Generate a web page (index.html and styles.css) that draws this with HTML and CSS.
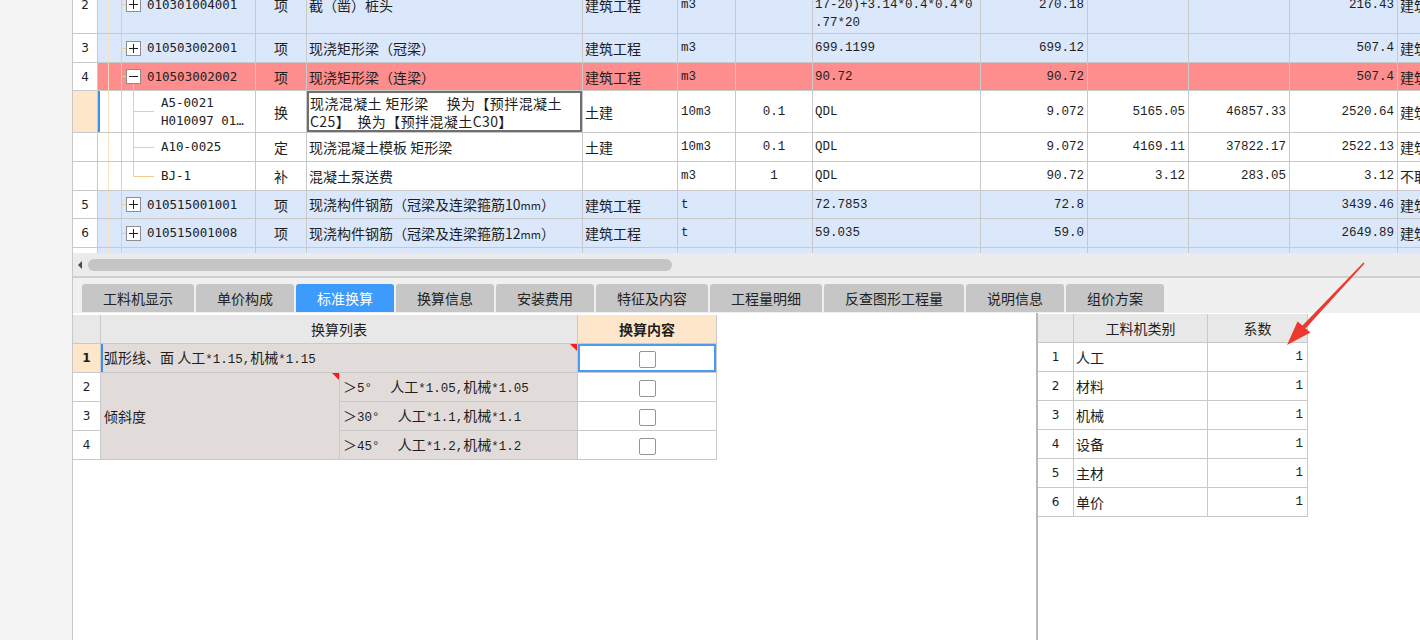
FILE: index.html
```html
<!DOCTYPE html>
<html lang="zh-CN">
<head>
<meta charset="utf-8">
<title>标准换算</title>
<link rel="stylesheet" href="styles.css">
</head>
<body>
<div class="app">
  <aside class="gutter"></aside>
  <main class="workspace">
    <section class="grid-view">
      <table class="grid">
        <colgroup>
          <col class="c-no"><col class="c-code"><col class="c-type"><col class="c-name"><col class="c-spec"><col class="c-unit"><col class="c-qty"><col class="c-expr"><col class="c-amt"><col class="c-price"><col class="c-total"><col class="c-unitp"><col class="c-fee">
        </colgroup>
        <tbody>
          <tr class="blue h58">
            <td class="no">2</td>
            <td class="code parent"><span class="tree"><i class="box plus"></i><span>010301004001</span></span></td>
            <td class="type">项</td>
            <td class="name">截（凿）桩头</td>
            <td class="spec">建筑工程</td>
            <td class="unit n">m3</td>
            <td class="qty n"></td>
            <td class="expr n">3.14*0.4*0.4*0.77*(<br>17-20)+3.14*0.4*0.4*0<br>.77*20</td>
            <td class="r n">270.18</td>
            <td class="r n"></td>
            <td class="r n"></td>
            <td class="r n">216.43</td>
            <td class="fee">建筑工程</td>
          </tr>
          <tr class="blue h29">
            <td class="no">3</td>
            <td class="code parent"><span class="tree"><i class="box plus"></i><span>010503002001</span></span></td>
            <td class="type">项</td>
            <td class="name">现浇矩形梁（冠梁）</td>
            <td class="spec">建筑工程</td>
            <td class="unit n">m3</td>
            <td class="qty n"></td>
            <td class="expr n">699.1199</td>
            <td class="r n">699.12</td>
            <td class="r n"></td>
            <td class="r n"></td>
            <td class="r n">507.4</td>
            <td class="fee">建筑工程</td>
          </tr>
          <tr class="red h28">
            <td class="no">4</td>
            <td class="code parent open"><span class="tree"><i class="box minus"></i><span>010503002002</span></span></td>
            <td class="type">项</td>
            <td class="name">现浇矩形梁（连梁）</td>
            <td class="spec">建筑工程</td>
            <td class="unit n">m3</td>
            <td class="qty n"></td>
            <td class="expr n">90.72</td>
            <td class="r n">90.72</td>
            <td class="r n"></td>
            <td class="r n"></td>
            <td class="r n">507.4</td>
            <td class="fee">建筑工程</td>
          </tr>
          <tr class="white h42 current">
            <td class="no sel"></td>
            <td class="code child focus"><span class="tree">A5-0021<br>H010097 01…</span></td>
            <td class="type">换</td>
            <td class="name editing">现浇混凝土 矩形梁　 换为【预拌混凝土<br>C25】　换为【预拌混凝土C30】</td>
            <td class="spec">土建</td>
            <td class="unit n">10m3</td>
            <td class="qty n">0.1</td>
            <td class="expr n">QDL</td>
            <td class="r n">9.072</td>
            <td class="r n">5165.05</td>
            <td class="r n">46857.33</td>
            <td class="r n">2520.64</td>
            <td class="fee">建筑工程</td>
          </tr>
          <tr class="white h29">
            <td class="no"></td>
            <td class="code child"><span class="tree">A10-0025</span></td>
            <td class="type">定</td>
            <td class="name">现浇混凝土模板 矩形梁</td>
            <td class="spec">土建</td>
            <td class="unit n">10m3</td>
            <td class="qty n">0.1</td>
            <td class="expr n">QDL</td>
            <td class="r n">9.072</td>
            <td class="r n">4169.11</td>
            <td class="r n">37822.17</td>
            <td class="r n">2522.13</td>
            <td class="fee">建筑工程</td>
          </tr>
          <tr class="white h29">
            <td class="no"></td>
            <td class="code child last"><span class="tree">BJ-1</span></td>
            <td class="type">补</td>
            <td class="name">混凝土泵送费</td>
            <td class="spec"></td>
            <td class="unit n">m3</td>
            <td class="qty n">1</td>
            <td class="expr n">QDL</td>
            <td class="r n">90.72</td>
            <td class="r n">3.12</td>
            <td class="r n">283.05</td>
            <td class="r n">3.12</td>
            <td class="fee">不取费</td>
          </tr>
          <tr class="blue h28">
            <td class="no">5</td>
            <td class="code parent"><span class="tree"><i class="box plus"></i><span>010515001001</span></span></td>
            <td class="type">项</td>
            <td class="name">现浇构件钢筋（冠梁及连梁箍筋10<small>mm</small>）</td>
            <td class="spec">建筑工程</td>
            <td class="unit n">t</td>
            <td class="qty n"></td>
            <td class="expr n">72.7853</td>
            <td class="r n">72.8</td>
            <td class="r n"></td>
            <td class="r n"></td>
            <td class="r n">3439.46</td>
            <td class="fee">建筑工程</td>
          </tr>
          <tr class="blue h29">
            <td class="no">6</td>
            <td class="code parent"><span class="tree"><i class="box plus"></i><span>010515001008</span></span></td>
            <td class="type">项</td>
            <td class="name">现浇构件钢筋（冠梁及连梁箍筋12<small>mm</small>）</td>
            <td class="spec">建筑工程</td>
            <td class="unit n">t</td>
            <td class="qty n"></td>
            <td class="expr n">59.035</td>
            <td class="r n">59.0</td>
            <td class="r n"></td>
            <td class="r n"></td>
            <td class="r n">2649.89</td>
            <td class="fee">建筑工程</td>
          </tr>
          <tr class="blue h29">
            <td class="no">7</td>
            <td class="code parent"><span class="tree"><i class="box plus"></i><span>010515001009</span></span></td>
            <td class="type">项</td>
            <td class="name">现浇构件钢筋（冠梁及连梁主筋）</td>
            <td class="spec">建筑工程</td>
            <td class="unit n">t</td>
            <td class="qty n"></td>
            <td class="expr n">18.42</td>
            <td class="r n">18.4</td>
            <td class="r n"></td>
            <td class="r n"></td>
            <td class="r n">3210.5</td>
            <td class="fee">建筑工程</td>
          </tr>
        </tbody>
      </table>
    </section>

    <div class="hscroll"><span class="arrow-left"></span><span class="thumb"></span></div>

    <nav class="tabbar">
      <span class="tab">工料机显示</span>
      <span class="tab">单价构成</span>
      <span class="tab active">标准换算</span>
      <span class="tab">换算信息</span>
      <span class="tab">安装费用</span>
      <span class="tab">特征及内容</span>
      <span class="tab">工程量明细</span>
      <span class="tab">反查图形工程量</span>
      <span class="tab">说明信息</span>
      <span class="tab">组价方案</span>
    </nav>

    <section class="panels">
      <div class="panel-left">
        <table class="sub">
          <colgroup><col class="s-no"><col class="s-a"><col class="s-b"><col class="s-c"></colgroup>
          <thead>
            <tr>
              <th class="hd"></th>
              <th class="hd" colspan="2">换算列表</th>
              <th class="hd hl">换算内容</th>
            </tr>
          </thead>
          <tbody>
            <tr>
              <td class="no sel">1</td>
              <td class="item focus-left mark" colspan="2">弧形线、面 人工<span class="lat">*1.15,</span>机械<span class="lat">*1.15</span></td>
              <td class="chk focus"><span class="checkbox"></span></td>
            </tr>
            <tr>
              <td class="no">2</td>
              <td class="item group mark" rowspan="3">倾斜度</td>
              <td class="item">＞<span class="lat">5°&nbsp;&nbsp;</span> 人工<span class="lat">*1.05,</span>机械<span class="lat">*1.05</span></td>
              <td class="chk"><span class="checkbox"></span></td>
            </tr>
            <tr>
              <td class="no">3</td>
              <td class="item">＞<span class="lat">30°&nbsp;&nbsp;</span> 人工<span class="lat">*1.1,</span>机械<span class="lat">*1.1</span></td>
              <td class="chk"><span class="checkbox"></span></td>
            </tr>
            <tr>
              <td class="no">4</td>
              <td class="item">＞<span class="lat">45°&nbsp;&nbsp;</span> 人工<span class="lat">*1.2,</span>机械<span class="lat">*1.2</span></td>
              <td class="chk"><span class="checkbox"></span></td>
            </tr>
          </tbody>
        </table>
      </div>
      <div class="panel-right">
        <table class="coef">
          <colgroup><col class="k-no"><col class="k-name"><col class="k-val"></colgroup>
          <thead>
            <tr><th class="hd"></th><th class="hd">工料机类别</th><th class="hd">系数</th></tr>
          </thead>
          <tbody>
            <tr><td class="no">1</td><td class="nm">人工</td><td class="val">1</td></tr>
            <tr><td class="no">2</td><td class="nm">材料</td><td class="val">1</td></tr>
            <tr><td class="no">3</td><td class="nm">机械</td><td class="val">1</td></tr>
            <tr><td class="no">4</td><td class="nm">设备</td><td class="val">1</td></tr>
            <tr><td class="no">5</td><td class="nm">主材</td><td class="val">1</td></tr>
            <tr><td class="no">6</td><td class="nm">单价</td><td class="val">1</td></tr>
          </tbody>
        </table>
      </div>
    </section>
  </main>
</div>

<svg class="annot" width="1420" height="640" viewBox="0 0 1420 640" aria-hidden="true">
  <polygon points="1364.6,263.6 1363.4,262.4 1302.5,325.5 1297.5,321.5 1287,345 1310.5,332.5 1305.5,328.5" fill="#ec3a2e"/>
</svg>
</body>
</html>
```

FILE: styles.css
```css
* { box-sizing: border-box; }
html, body { margin: 0; padding: 0; }
body {
  width: 1420px;
  height: 640px;
  overflow: hidden;
  position: relative;
  background: #ffffff;
  font-family: "Noto Sans CJK SC", "Liberation Sans", sans-serif;
  font-size: 14px;
  color: #1e1e1e;
}

.app { display: flex; height: 640px; }
.gutter { width: 72px; flex: none; background: #f3f3f3; }
.workspace {
  flex: 1;
  min-width: 0;
  display: flex;
  flex-direction: column;
  border-left: 1px solid #c8c8c8;
}

/* ---------- main grid ---------- */
.grid-view { height: 253px; flex: none; overflow: hidden; }
.grid {
  border-collapse: separate;
  border-spacing: 0;
  table-layout: fixed;
  width: 1405px;
  margin-top: -24px;
}
.c-no { width: 25px; }
.c-code { width: 158px; }
.c-type { width: 51px; }
.c-name { width: 276px; }
.c-spec { width: 95px; }
.c-unit { width: 58px; }
.c-qty { width: 77px; }
.c-expr { width: 168px; }
.c-amt { width: 107px; }
.c-price { width: 101px; }
.c-total { width: 101px; }
.c-unitp { width: 108px; }
.c-fee { width: 80px; }

.grid td {
  border-right: 1px solid #c9c9c9;
  border-bottom: 1px solid #c9c9c9;
  padding: 0 3px;
  white-space: nowrap;
  overflow: hidden;
  line-height: 18px;
  vertical-align: middle;
}
.h58 { height: 58px; }
.h42 { height: 42px; }
.h29 { height: 29px; }
.h28 { height: 28px; }

.blue td { background-color: #dbe7fb; }
.red td { background-color: #fe8e8e; }
.white td { background-color: #ffffff; }
.grid td.no {
  background-color: #ffffff;
  text-align: center;
  font-family: "DejaVu Sans", sans-serif;
  font-size: 12px;
  padding: 0;
}
.grid td.no.sel { background-color: #fde6c9; }

.grid td.n { font-family: "Liberation Mono", "Noto Sans CJK SC", monospace; font-size: 12.5px; }
.grid td.r { text-align: right; padding-right: 3px; }
.grid td.type { text-align: center; }
.grid td.name { padding-left: 2px; }
.grid td.name small { font-size: 11px; }
.grid td.spec { padding-left: 2px; }
.grid td.qty { text-align: center; }
.grid td.expr { padding-left: 2px; }
.grid td.fee { padding-left: 2px; }
.grid td.editing { box-shadow: inset 0 0 0 2px #6f6f6f; padding-left: 3px; letter-spacing: 0.4px; }

/* tree column */
.grid td.code {
  padding: 0;
  font-family: "DejaVu Sans Mono", monospace;
  font-size: 12.5px;
  color: #222;
  background-image:
    linear-gradient(#fde2c2, #fde2c2),
    linear-gradient(#f8c98e, #f8c98e);
  background-size: 1px 100%, 1px 100%;
  background-position: 10px 0, 23px 0;
  background-repeat: no-repeat;
}
.grid td.code.parent {
  background-image:
    linear-gradient(#fde2c2, #fde2c2),
    linear-gradient(#f8c98e, #f8c98e),
    linear-gradient(#f8c98e, #f8c98e);
  background-size: 1px 100%, 1px 100%, 5px 1px;
  background-position: 10px 0, 23px 0, 23px 50%;
}
.grid td.code.parent.open {
  background-image:
    linear-gradient(#fde2c2, #fde2c2),
    linear-gradient(#f8c98e, #f8c98e),
    linear-gradient(#f8c98e, #f8c98e),
    linear-gradient(#f8c98e, #f8c98e);
  background-size: 1px 100%, 1px 100%, 5px 1px, 1px 50%;
  background-position: 10px 0, 23px 0, 23px 50%, 35px 100%;
}
.grid td.code.child {
  background-image:
    linear-gradient(#fde2c2, #fde2c2),
    linear-gradient(#f8c98e, #f8c98e),
    linear-gradient(#f8c98e, #f8c98e),
    linear-gradient(#f8c98e, #f8c98e);
  background-size: 1px 100%, 1px 100%, 1px 100%, 21px 1px;
  background-position: 10px 0, 23px 0, 35px 0, 35px 50%;
}
.grid td.code.child.last {
  background-size: 1px 100%, 1px 100%, 1px 50%, 21px 1px;
  background-position: 10px 0, 23px 0, 35px 0, 35px 50%;
}
.grid td.code.focus { box-shadow: inset 2px 0 0 #3b8ff0; }

.tree { display: flex; align-items: center; gap: 6px; }
.parent .tree { padding-left: 28px; }
.child .tree { display: block; padding-left: 63px; }

.box {
  position: relative;
  display: inline-block;
  flex: none;
  width: 15px;
  height: 15px;
  border: 1px solid #8d8d8d;
  background: #fff;
}
.box::before, .box::after {
  content: "";
  position: absolute;
  background: #1e1e1e;
}
.box::before { left: 2px; right: 2px; top: 6px; height: 1px; }
.box.plus::after { top: 2px; bottom: 2px; left: 6px; width: 1px; }

/* ---------- horizontal scrollbar ---------- */
.hscroll {
  height: 23px;
  flex: none;
  background: #ebebeb;
  display: flex;
  align-items: center;
  padding-left: 5px;
}
.arrow-left {
  width: 0;
  height: 0;
  border-top: 4px solid transparent;
  border-bottom: 4px solid transparent;
  border-right: 4px solid #4a4a4a;
  margin-right: 6px;
}
.thumb {
  width: 584px;
  height: 12px;
  border-radius: 6px;
  background: #c5c5c5;
}

/* ---------- tabs ---------- */
.tabbar {
  height: 37px;
  flex: none;
  border-top: 2px solid #cfcfcf;
  background: #f0f0f0;
  display: flex;
  align-items: flex-end;
  gap: 2px;
  padding: 0 0 1px 9px;
}
.tab {
  height: 28px;
  padding: 0 21px;
  line-height: 28px;
  background: #c6c6c6;
  border-radius: 3px 3px 0 0;
  color: #222;
  white-space: nowrap;
}
.tab.active { background: #3d9bfc; color: #fff; }

/* ---------- bottom panels ---------- */
.panels { flex: 1; display: flex; min-height: 0; }
.panel-left { width: 963px; flex: none; padding-top: 2px; }
.panel-right { flex: 1; border-left: 2px solid #b9b9b9; padding-top: 1px; }

.sub, .coef {
  border-collapse: separate;
  border-spacing: 0;
  table-layout: fixed;
}
.sub { width: 644px; }
.s-no { width: 28px; }
.s-a { width: 239px; }
.s-b { width: 238px; }
.s-c { width: 139px; }

.sub th, .sub td, .coef th, .coef td {
  height: 29px;
  padding: 0 3px;
  border-right: 1px solid #c9c9c9;
  border-bottom: 1px solid #c9c9c9;
  line-height: 18px;
  white-space: nowrap;
  vertical-align: middle;
  font-weight: normal;
  position: relative;
}
.sub th.hd, .coef th.hd { background: #e8e8e8; text-align: center; }
.sub th.hl { background: #fde6c9; font-weight: bold; }
.sub td.no, .coef td.no {
  text-align: center;
  font-family: "DejaVu Sans", sans-serif;
  font-size: 12px;
  padding: 0;
}
.sub td.no.sel { background: #fde6c9; font-weight: bold; }
.sub td.item { background: #e1dcda; }
.sub td.item .lat { font-family: "Liberation Mono", monospace; font-size: 12.5px; }
.sub td.focus-left { box-shadow: inset 2px 0 0 #3b8ff0; }
.sub td.mark::after {
  content: "";
  position: absolute;
  top: 0;
  right: 0;
  border-top: 7px solid #ff1a1a;
  border-left: 7px solid transparent;
}
.sub td.chk { text-align: center; padding: 0; }
.sub td.chk.focus { box-shadow: inset 0 0 0 2px #4a9bf3; }
.checkbox {
  display: inline-block;
  vertical-align: middle;
  width: 17px;
  height: 17px;
  border: 1px solid #959595;
  border-radius: 2px;
  background: #fff;
}

.coef { width: 270px; }
.k-no { width: 36px; }
.k-name { width: 134px; }
.k-val { width: 100px; }
.coef td.nm { padding-left: 2px; }
.coef td.val {
  text-align: right;
  padding-right: 4px;
  font-family: "Liberation Mono", monospace;
  font-size: 12.5px;
}

/* annotation arrow */
.annot {
  position: absolute;
  left: 0;
  top: 0;
  pointer-events: none;
}
```
